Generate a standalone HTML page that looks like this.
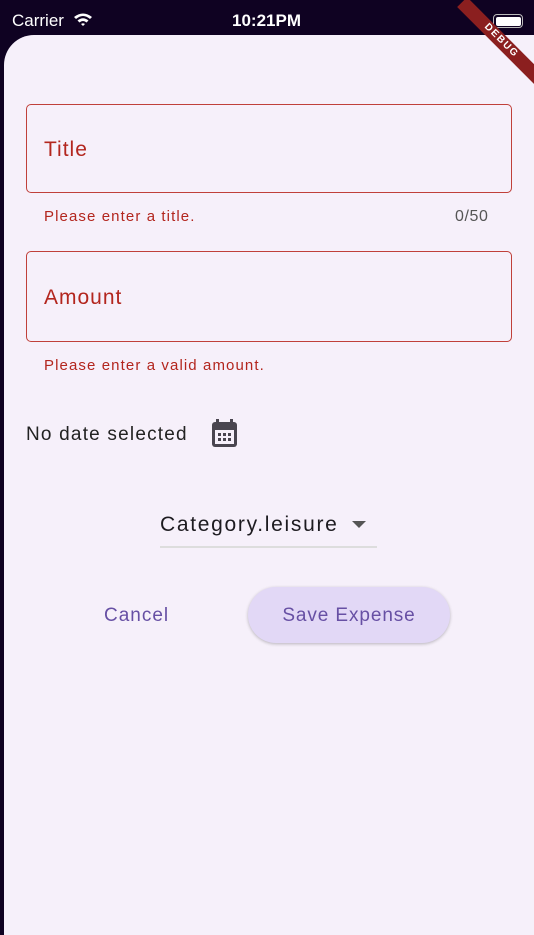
<!DOCTYPE html>
<html><head><style>
*{margin:0;padding:0;box-sizing:border-box}
body{width:534px;height:914px;background:#0f0222;position:relative;overflow:hidden;font-family:"Liberation Sans",sans-serif}
.sb{position:absolute;top:0;left:0;width:534px;height:40px;color:#fff}
.sheet{position:absolute;left:4px;top:35px;width:560px;height:900px;background:#f6f0fa;border-radius:30px 30px 0 0}
.field{position:absolute;left:26px;width:486px;border:1.3px solid #c0403a;border-radius:5px;background:transparent}
.lbl{position:absolute;left:44px;color:#b3261e;font-size:21px;letter-spacing:1px}
.err{position:absolute;left:44px;color:#b3261e;font-size:15px;letter-spacing:1.1px}
</style></head><body>
<div class="sb">
<div style="position:absolute;left:12px;top:11px;font-size:17px">Carrier</div>
<svg style="position:absolute;left:73px;top:12px" width="20" height="15" viewBox="0 0 20 15"><path d="M1 5 Q10 -2 19 5 L17 7 Q10 1 3 7Z M4.5 8.5 Q10 4 15.5 8.5 L13.5 10.5 Q10 7.5 6.5 10.5Z M8 12 Q10 10.5 12 12 L10 14Z" fill="#fff"/></svg>
<div style="position:absolute;left:232px;top:11px;font-size:17px;font-weight:bold">10:21PM</div>
<div style="position:absolute;left:493px;top:14px;width:30px;height:14px;border:1.5px solid #bbb;border-radius:4px;padding:1.5px"><div style="width:100%;height:100%;background:#fff;border-radius:2px"></div></div>
</div>
<div class="sheet"></div>
<div style="position:absolute;left:446px;top:34px;width:110px;height:14px;background:#8b1f1f;transform:rotate(45deg);color:#fff;font-size:10px;font-weight:bold;text-align:center;line-height:14px;letter-spacing:1.5px">DEBUG</div>
<div class="field" style="top:104px;height:89px"></div>
<div class="lbl" style="top:138px">Title</div>
<div class="err" style="top:208px">Please enter a title.</div>
<div style="position:absolute;left:455px;top:208px;color:#555;font-size:16px;letter-spacing:.6px">0/50</div>
<div class="field" style="top:251px;height:91px"></div>
<div class="lbl" style="top:286px">Amount</div>
<div class="err" style="top:357px">Please enter a valid amount.</div>
<div style="position:absolute;left:26px;top:424px;font-size:19px;color:#222;letter-spacing:1.2px">No date selected</div>
<svg style="position:absolute;left:211px;top:419px" width="27" height="29" viewBox="0 0 27 29"><rect x="1" y="3" width="25" height="25" rx="3" fill="#49454f"/><rect x="5" y="0" width="3" height="6" fill="#49454f"/><rect x="19" y="0" width="3" height="6" fill="#49454f"/><rect x="4" y="11" width="19" height="14" fill="#f6f0fa"/><g fill="#49454f"><rect x="7" y="14" width="3" height="3"/><rect x="12" y="14" width="3" height="3"/><rect x="17" y="14" width="3" height="3"/><rect x="7" y="19" width="3" height="3"/><rect x="12" y="19" width="3" height="3"/><rect x="17" y="19" width="3" height="3"/></g></svg>
<div style="position:absolute;left:160px;top:513px;font-size:21px;color:#1d1b20;letter-spacing:1.7px">Category.leisure</div>
<svg style="position:absolute;left:352px;top:521px" width="14" height="8"><path d="M0 0 L14 0 L7 7Z" fill="#555"/></svg>
<div style="position:absolute;left:160px;top:546px;width:217px;height:1.5px;background:#ddd"></div>
<div style="position:absolute;left:104px;top:605px;font-size:19px;color:#6750a4;letter-spacing:1px">Cancel</div>
<div style="position:absolute;left:248px;top:587px;width:202px;height:56px;border-radius:28px;background:#e2d8f6;box-shadow:0 1px 3px rgba(0,0,0,.25);color:#6750a4;font-size:19px;text-align:center;line-height:58px;letter-spacing:.9px">Save Expense</div>
</body></html>
